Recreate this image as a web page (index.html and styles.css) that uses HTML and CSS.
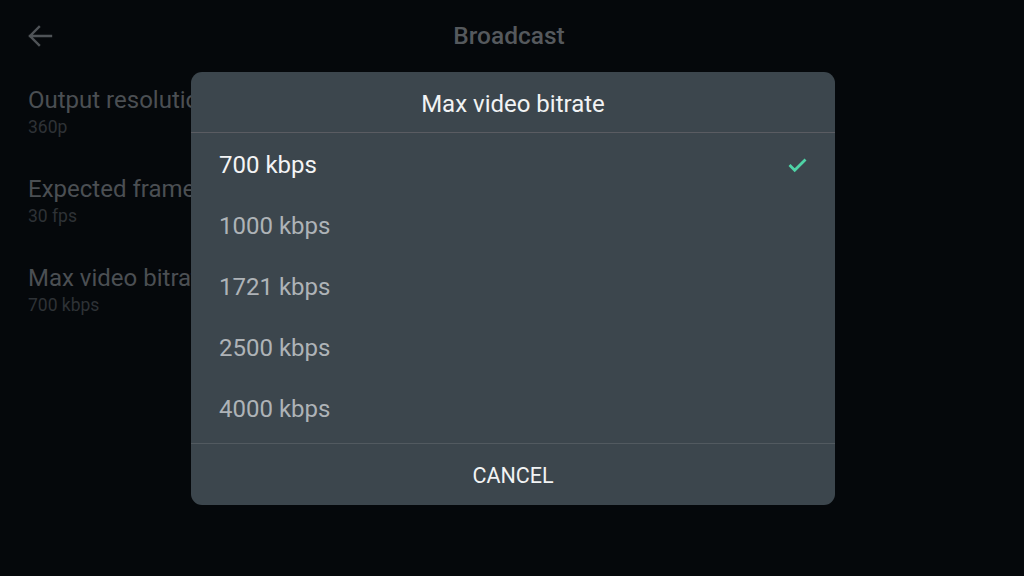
FILE: index.html
```html
<!DOCTYPE html>
<html>
<head>
<meta charset="utf-8">
<link rel="stylesheet" href="styles.css">
</head>
<body>
<div class="screen">
  <header class="topbar">
    <svg class="back" width="26" height="22" viewBox="0 0 26 22"><path d="M24 11H3M12 2L3 11l9 9" fill="none" stroke="#4f5357" stroke-width="2.4" stroke-linecap="square"/></svg>
    <div class="title">Broadcast</div>
  </header>
  <ul class="settings">
    <li><div class="label">Output resolution</div><div class="value">360p</div></li>
    <li><div class="label">Expected frame rate</div><div class="value">30 fps</div></li>
    <li><div class="label">Max video bitrate</div><div class="value">700 kbps</div></li>
  </ul>
  <div class="dialog">
    <div class="dialog-title">Max video bitrate</div>
    <ul class="options">
      <li class="option selected"><span>700 kbps</span>
        <svg class="check" width="20" height="16" viewBox="0 0 20 16"><path d="M2.5 8l5.2 5.2L18.5 2.5" fill="none" stroke="#4fd3a6" stroke-width="2.8"/></svg>
      </li>
      <li class="option"><span>1000 kbps</span></li>
      <li class="option"><span>1721 kbps</span></li>
      <li class="option"><span>2500 kbps</span></li>
      <li class="option"><span>4000 kbps</span></li>
    </ul>
    <div class="dialog-actions"><button class="cancel">CANCEL</button></div>
  </div>
</div>
</body>
</html>
```
FILE: styles.css
```css
* { box-sizing: border-box; }
html, body { margin: 0; padding: 0; }
body {
  width: 1024px;
  height: 576px;
  background: #05080b;
  font-family: Roboto, "Liberation Sans", sans-serif;
  overflow: hidden;
}
.screen { position: relative; width: 1024px; height: 576px; }
.topbar {
  position: relative;
  height: 72px;
  display: flex;
  align-items: center;
  justify-content: center;
  padding-bottom: 2px;
}
.back { position: absolute; left: 27px; top: 25px; }
.title {
  color: #55595d;
  font-size: 24.5px;
  font-weight: 500;
  margin-left: -6px;
}
.settings { list-style: none; margin: 0; padding: 0 0 0 28px; }
.settings li { height: 89px; padding-top: 13px; }
.label { color: #4b4f53; font-size: 24px; line-height: 30px; }
.value { color: #2e3236; font-size: 17.5px; line-height: 22px; margin-top: 1px; }
.dialog {
  position: absolute;
  left: 191px;
  top: 72px;
  width: 644px;
  height: 433px;
  background: #3c464d;
  border-radius: 11px;
  display: flex;
  flex-direction: column;
}
.dialog-title {
  height: 61px;
  display: flex;
  align-items: center;
  justify-content: center;
  color: #f1f3f4;
  font-size: 24px;
  border-bottom: 1px solid #5a5c62;
  padding-top: 3px;
}
.options { list-style: none; margin: 0; padding: 0 0 5px 0; border-bottom: 1px solid #525a60; }
.option {
  height: 61px;
  display: flex;
  align-items: center;
  justify-content: space-between;
  padding: 3px 28px 0 28px;
  font-size: 24px;
  color: #aeb3b7;
}
.option.selected { color: #f3f4f5; }
.dialog-actions { flex: 1; display: flex; align-items: center; justify-content: center; }
.cancel {
  background: none;
  border: 0;
  color: #f1f3f4;
  font-family: inherit;
  font-size: 21.5px;
  padding: 0;
  margin-top: 1px;
}
```
